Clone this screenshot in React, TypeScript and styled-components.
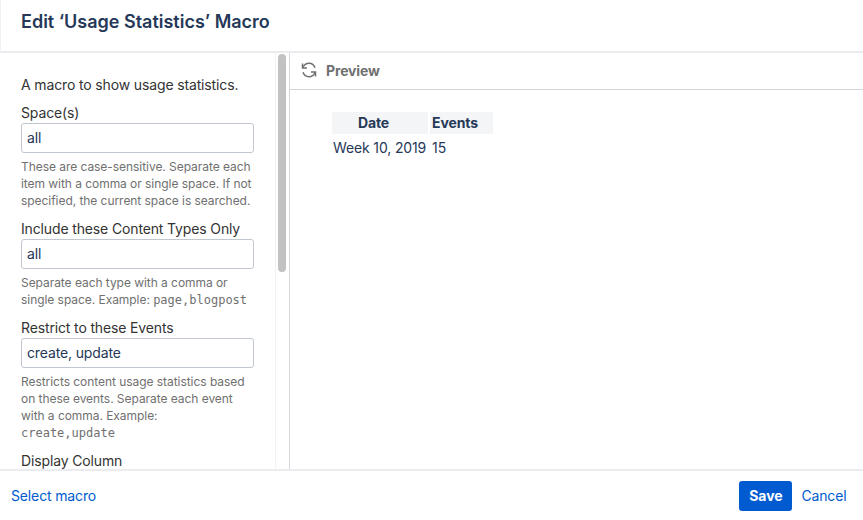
import React from "react";
import styled, { createGlobalStyle } from "styled-components";

const Global = createGlobalStyle`
  html, body { margin: 0; padding: 0; background: #fff; }
  body { font-family: Inter, "Liberation Sans", sans-serif; font-size: 14px; color: #172b4d; letter-spacing: -0.14px; }
  * { box-sizing: border-box; }
`;

const Dialog = styled.div`
  width: 863px;
  height: 520px;
  display: flex;
  flex-direction: column;
  overflow: hidden;
  background: #fff;
`;
const Header = styled.header`
  height: 53px;
  flex: none;
  padding: 12px 21px 0;
  border-left: 1px solid #f0f1f4;
  border-bottom: 2px solid #ebecf0;
`;
const Title = styled.h2`
  margin: 0 0 0 -1px;
  font-size: 18px;
  line-height: 20px;
  font-weight: 600;
  letter-spacing: 0;
  color: #253858;
`;
const Body = styled.div`
  flex: 1;
  display: flex;
  min-height: 0;
`;
const Form = styled.div`
  width: 275px;
  flex: none;
  padding: 22px 21px 0;
  overflow: hidden;
`;
const Intro = styled.p`
  margin: 0 0 8px;
  font-size: 14px;
  line-height: 20px;
  color: #333;
`;
const Field = styled.div`
  margin-bottom: 10px;
`;
const Label = styled.label`
  display: block;
  font-size: 14px;
  line-height: 20px;
  color: #333;
`;
const Input = styled.div`
  height: 30px;
  width: 233px;
  padding: 0 5px 1px;
  display: flex;
  align-items: center;
  border: 1px solid #c1c7d0;
  border-radius: 3px;
  font-size: 14px;
  color: #253858;
`;
const Hint = styled.div`
  margin-top: 5px;
  font-size: 12px;
  line-height: 17px;
  letter-spacing: -0.05px;
  color: #707070;
`;
const Code = styled.code`
  font-family: "DejaVu Sans Mono", "Liberation Mono", monospace;
  font-size: 12px;
  line-height: 16px;
  letter-spacing: 0;
`;
const Track = styled.div`
  width: 15px;
  flex: none;
  padding: 1px 2px 0;
  border-right: 1px solid #d4d6da;
  border-left: 1px solid #f2f2f2;
`;
const Thumb = styled.div`
  width: 8px;
  height: 218px;
  background: #c2c2c2;
  border-radius: 4px;
`;
const Preview = styled.section`
  flex: 1;
  min-width: 0;
`;
const PreviewBar = styled.div`
  height: 37px;
  display: flex;
  align-items: center;
  gap: 9px;
  padding: 0 0 2px 11px;
  border-bottom: 1px solid #d4d6da;
`;
const PreviewTitle = styled.span`
  font-size: 14px;
  font-weight: 700;
  color: #707070;
`;
const Content = styled.div`
  padding: 22px 0 0 42px;
`;
const Table = styled.table`
  border-collapse: separate;
  border-spacing: 2px 0;
  margin-left: -2px;
  font-size: 14px;
  color: #253858;
  th {
    background: #f4f5f7;
    height: 22px;
    padding: 0 15px 1px 2px;
    font-weight: 700;
    text-align: center;
  }
  td {
    height: 26px;
    padding: 0 2px 0 1px;
  }
  td:last-child { padding-left: 2px; }
  th:last-child { text-align: left; }
`;
const Footer = styled.footer`
  height: 51px;
  flex: none;
  border-top: 2px solid #ebecf0;
  display: flex;
  align-items: center;
  justify-content: space-between;
  padding: 0 16.5px 0 11px;
`;
const LinkText = styled.a`
  font-size: 14px;
  color: #005bd0;
  text-decoration: none;
`;
const Actions = styled.div`
  display: flex;
  align-items: center;
  gap: 9px;
`;
const Save = styled.button`
  width: 53px;
  height: 30px;
  border: 0;
  border-radius: 3px;
  background: #005bd0;
  color: #fff;
  font-family: inherit;
  font-size: 14px;
  font-weight: 700;
  padding: 0;
`;

const RefreshIcon = () => (
  <svg width="16" height="16" viewBox="0 0 16 16" fill="none" stroke="#707070" strokeWidth="1.5">
    <path d="M1.5 1.5V6H6" />
    <path d="M2 5.5C3 3 5.4 1.3 8 1.3c2.8 0 5 1.7 6 4.4" />
    <path d="M14.5 14.5V10H10" />
    <path d="M14 10.5c-1 2.5-3.4 4.2-6 4.2-2.8 0-5-1.7-6-4.4" />
  </svg>
);

export default function App() {
  return (
    <Dialog>
      <Global />
      <Header>
        <Title>Edit ‘Usage Statistics’ Macro</Title>
      </Header>
      <Body>
        <Form>
          <Intro>A macro to show usage statistics.</Intro>
          <Field>
            <Label>Space(s)</Label>
            <Input>all</Input>
            <Hint>
              These are case-sensitive. Separate each item with a comma or single space. If not
              specified, the current space is searched.
            </Hint>
          </Field>
          <Field>
            <Label>Include these Content Types Only</Label>
            <Input>all</Input>
            <Hint>
              Separate each type with a comma or single space. Example: <Code>page,blogpost</Code>
            </Hint>
          </Field>
          <Field>
            <Label>Restrict to these Events</Label>
            <Input>create, update</Input>
            <Hint>
              Restricts content usage statistics based on these events. Separate each event with a
              comma. Example: <Code>create,update</Code>
            </Hint>
          </Field>
          <Field>
            <Label>Display Column</Label>
          </Field>
        </Form>
        <Track>
          <Thumb />
        </Track>
        <Preview>
          <PreviewBar>
            <RefreshIcon />
            <PreviewTitle>Preview</PreviewTitle>
          </PreviewBar>
          <Content>
            <Table>
              <thead>
                <tr>
                  <th>Date</th>
                  <th>Events</th>
                </tr>
              </thead>
              <tbody>
                <tr>
                  <td>Week 10, 2019</td>
                  <td>15</td>
                </tr>
              </tbody>
            </Table>
          </Content>
        </Preview>
      </Body>
      <Footer>
        <LinkText href="#">Select macro</LinkText>
        <Actions>
          <Save>Save</Save>
          <LinkText href="#">Cancel</LinkText>
        </Actions>
      </Footer>
    </Dialog>
  );
}
